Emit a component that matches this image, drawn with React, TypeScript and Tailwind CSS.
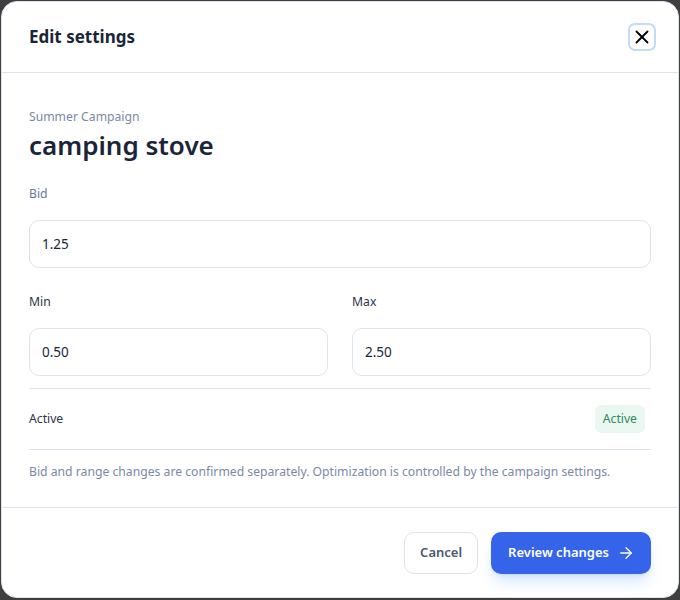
import { X, ArrowRight } from 'lucide-react';

export default function App() {
  return (
    <div className="w-[680px] h-[600px] bg-[#3f3f3f] pt-px pl-px" style={{ fontFamily: '"Noto Sans", "Open Sans", sans-serif' }}>
      <div className="w-[678px] h-[597px] bg-white rounded-2xl border border-[#dde4ee] flex flex-col overflow-hidden">
        <div className="h-[71px] shrink-0 flex items-center justify-between pl-[27px] pr-[24px] border-b border-[#dde4ee]">
          <h2 className="text-[17px] font-bold text-[#1b2539]">Edit settings</h2>
          <button className="w-6 h-6 rounded-[5px] ring-2 ring-[#c4dafc] flex items-center justify-center text-black">
            <X className="w-[22px] h-[22px]" strokeWidth={2} />
          </button>
        </div>

        <div className="flex-1 px-[27px] pt-[35px]">
          <div className="text-[12.2px] text-[#7b89a3] leading-[18px]">Summer Campaign</div>
          <div className="text-[26px] font-semibold text-[#1b2539] leading-[36px] mt-px">camping stove</div>

          <label className="block text-[12.2px] text-[#6b7a96] mt-[22px] leading-[18px]">Bid</label>
          <input
            className="mt-[17px] w-full h-[48px] rounded-[10px] border border-[#dde4ee] px-3 text-[13.5px] text-[#1b2539] outline-none"
            defaultValue="1.25"
          />

          <div className="grid grid-cols-2 gap-6 mt-[25px]">
            <div>
              <label className="block text-[12.2px] text-[#2b3547] leading-[18px]">Min</label>
              <input
                className="mt-[17px] w-full h-[48px] rounded-[10px] border border-[#dde4ee] px-3 text-[13.5px] text-[#1b2539] outline-none"
                defaultValue="0.50"
              />
            </div>
            <div>
              <label className="block text-[12.2px] text-[#2b3547] leading-[18px]">Max</label>
              <input
                className="mt-[17px] w-full h-[48px] rounded-[10px] border border-[#dde4ee] px-3 text-[13.5px] text-[#1b2539] outline-none"
                defaultValue="2.50"
              />
            </div>
          </div>

          <div className="mt-3 border-t border-b border-[#dde4ee] h-[62px] flex items-center justify-between pr-[6px]">
            <span className="text-[12.2px] text-[#2b3547]">Active</span>
            <span className="h-7 px-2 rounded-md bg-[#ebf7f1] text-[#2f8a61] text-[12.2px] flex items-center">Active</span>
          </div>

          <p className="mt-[13px] text-[12.2px] text-[#7b89a3] leading-[18px]">
            Bid and range changes are confirmed separately. Optimization is controlled by the campaign settings.
          </p>
        </div>

        <div className="h-[90px] shrink-0 border-t border-[#dde4ee] flex items-center justify-end gap-[13px] pr-[27px]">
          <button className="h-[42px] px-[15px] rounded-[10px] border border-[#dde4ee] text-[13px] font-semibold text-[#4a5872]">
            Cancel
          </button>
          <button className="h-[42px] pl-[17px] pr-[16px] rounded-[10px] bg-[#3563e9] text-white text-[13px] font-semibold flex items-center gap-2 shadow-lg shadow-blue-500/20">
            Review changes
            <ArrowRight className="w-[18px] h-[18px]" strokeWidth={1.75} />
          </button>
        </div>
      </div>
    </div>
  );
}
